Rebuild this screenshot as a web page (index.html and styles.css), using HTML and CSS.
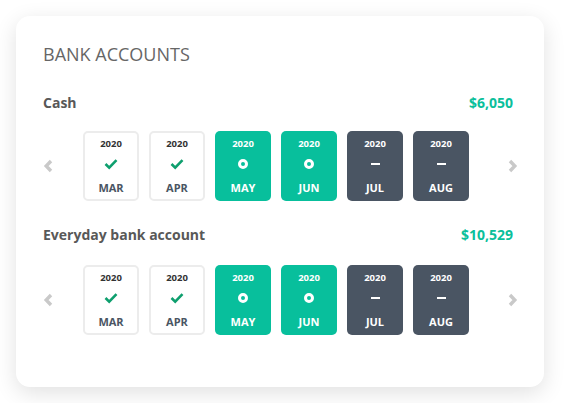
FILE: index.html
```html
<!DOCTYPE html>
<html lang="en">
<head>
    <meta charset="UTF-8">
    <title>Bank Accounts</title>
    <link rel="stylesheet" href="styles.css">
</head>
<body>
    <div class="card">
        <h2 class="card-title">BANK ACCOUNTS</h2>

        <div class="account">
            <div class="account-head">
                <span class="account-name">Cash</span>
                <span class="account-total">$6,050</span>
            </div>
            <div class="months">
                <span class="arrow"><svg width="11" height="14" viewBox="0 0 11 14"><path d="M8 2 L3.2 7 L8 12" fill="none" stroke="#c9c9c9" stroke-width="3.4"/></svg></span>
                <div class="tiles">
                    <div class="tile done"><span class="year">2020</span><span class="icon"><svg width="14" height="12" viewBox="0 0 14 12"><path d="M1.5 6 L5.2 9.6 L12.5 2.2" fill="none" stroke="#0e9f6e" stroke-width="2.6"/></svg></span><span class="month">MAR</span></div>
                    <div class="tile done"><span class="year">2020</span><span class="icon"><svg width="14" height="12" viewBox="0 0 14 12"><path d="M1.5 6 L5.2 9.6 L12.5 2.2" fill="none" stroke="#0e9f6e" stroke-width="2.6"/></svg></span><span class="month">APR</span></div>
                    <div class="tile current"><span class="year">2020</span><span class="icon"><span class="dot"></span></span><span class="month">MAY</span></div>
                    <div class="tile current"><span class="year">2020</span><span class="icon"><span class="dot"></span></span><span class="month">JUN</span></div>
                    <div class="tile future"><span class="year">2020</span><span class="icon"><span class="dash"></span></span><span class="month">JUL</span></div>
                    <div class="tile future"><span class="year">2020</span><span class="icon"><span class="dash"></span></span><span class="month">AUG</span></div>
                </div>
                <span class="arrow arrow-right"><svg width="11" height="14" viewBox="0 0 11 14"><path d="M3 2 L7.8 7 L3 12" fill="none" stroke="#c9c9c9" stroke-width="3.4"/></svg></span>
            </div>
        </div>

        <div class="account">
            <div class="account-head">
                <span class="account-name">Everyday bank account</span>
                <span class="account-total">$10,529</span>
            </div>
            <div class="months">
                <span class="arrow"><svg width="11" height="14" viewBox="0 0 11 14"><path d="M8 2 L3.2 7 L8 12" fill="none" stroke="#c9c9c9" stroke-width="3.4"/></svg></span>
                <div class="tiles">
                    <div class="tile done"><span class="year">2020</span><span class="icon"><svg width="14" height="12" viewBox="0 0 14 12"><path d="M1.5 6 L5.2 9.6 L12.5 2.2" fill="none" stroke="#0e9f6e" stroke-width="2.6"/></svg></span><span class="month">MAR</span></div>
                    <div class="tile done"><span class="year">2020</span><span class="icon"><svg width="14" height="12" viewBox="0 0 14 12"><path d="M1.5 6 L5.2 9.6 L12.5 2.2" fill="none" stroke="#0e9f6e" stroke-width="2.6"/></svg></span><span class="month">APR</span></div>
                    <div class="tile current"><span class="year">2020</span><span class="icon"><span class="dot"></span></span><span class="month">MAY</span></div>
                    <div class="tile current"><span class="year">2020</span><span class="icon"><span class="dot"></span></span><span class="month">JUN</span></div>
                    <div class="tile future"><span class="year">2020</span><span class="icon"><span class="dash"></span></span><span class="month">JUL</span></div>
                    <div class="tile future"><span class="year">2020</span><span class="icon"><span class="dash"></span></span><span class="month">AUG</span></div>
                </div>
                <span class="arrow arrow-right"><svg width="11" height="14" viewBox="0 0 11 14"><path d="M3 2 L7.8 7 L3 12" fill="none" stroke="#c9c9c9" stroke-width="3.4"/></svg></span>
            </div>
        </div>
    </div>
</body>
</html>
```

FILE: styles.css
```css
body {
    margin: 0;
    padding: 16px;
    background-color: #ffffff;
    font-family: "Open Sans", Arial, sans-serif;
}
.card {
    width: 528px;
    height: 371px;
    box-sizing: border-box;
    padding: 25px 26px 0 27px;
    background-color: #ffffff;
    border-radius: 14px;
    box-shadow: 0 6px 22px rgba(0, 0, 0, 0.12);
}
.card-title {
    margin: 0;
    font-size: 18px;
    line-height: 26px;
    font-weight: 400;
    color: #666666;
}
.account-head {
    display: flex;
    justify-content: space-between;
    padding-right: 5px;
    margin-top: 26px;
    font-size: 14px;
    line-height: 20px;
    font-weight: 700;
}
.account + .account .account-head {
    margin-top: 24px;
}
.account-name {
    color: #585858;
}
.account-total {
    color: #0bbf9b;
}
.months {
    display: flex;
    align-items: center;
    margin-top: 18px;
}
.account + .account .months {
    margin-top: 20px;
}
.arrow {
    display: flex;
    width: 11px;
}
.arrow-right {
    margin-left: auto;
}
.tiles {
    display: flex;
    gap: 10px;
    margin-left: 29px;
}
.tile {
    width: 56px;
    height: 70px;
    box-sizing: border-box;
    border-radius: 5px;
    display: flex;
    flex-direction: column;
    align-items: center;
    padding-top: 7px;
    font-weight: 700;
}
.tile.done {
    border: 2px solid #ececec;
    padding-top: 5px;
}
.tile.current {
    background-color: #08bf9c;
    color: #ffffff;
}
.tile.future {
    background-color: #4a5563;
    color: #ffffff;
}
.year {
    font-size: 9.5px;
    line-height: 12px;
}
.tile.done .year {
    color: #333333;
}
.icon {
    display: flex;
    align-items: center;
    justify-content: center;
    height: 14px;
    margin-top: 7px;
}
.month {
    font-size: 11px;
    line-height: 14px;
    margin-top: 10px;
}
.tile.done .month {
    color: #4a5563;
}
.dot {
    width: 4px;
    height: 4px;
    border: 3px solid #ffffff;
    border-radius: 50%;
    background-color: #08bf9c;
}
.dash {
    width: 9px;
    height: 2px;
    background-color: #ffffff;
}
```
